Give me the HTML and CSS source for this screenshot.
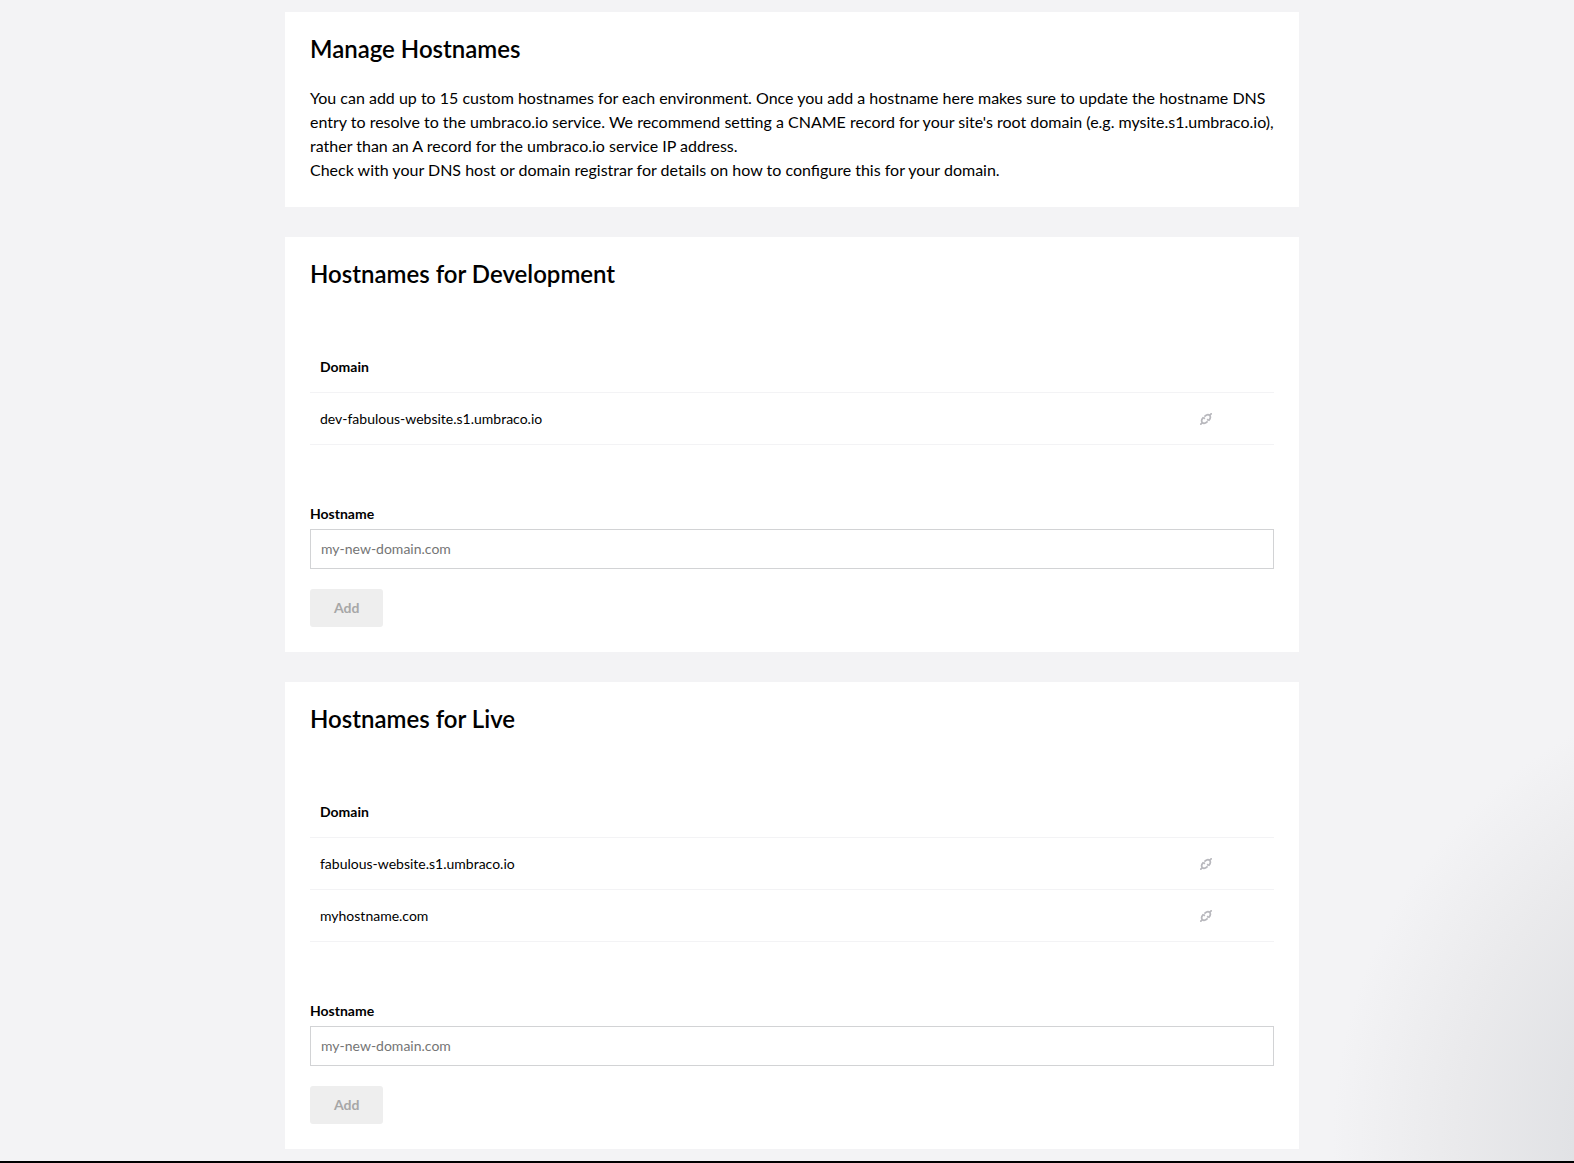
FILE: index.html
```html
<!DOCTYPE html>
<html lang="en">
<head>
  <meta charset="utf-8">
  <meta name="viewport" content="width=device-width, initial-scale=1">
  <title>Manage Hostnames</title>
  <link rel="stylesheet" href="styles.css">
</head>
<body>
  <svg class="sprite" aria-hidden="true">
    <symbol id="icon-link" viewBox="0 0 12 12">
      <path d="M0.2 11.8 2.4 9.6M9.6 2.4 11.8 0.2" />
      <path d="M7.600 8.400C5.900 10.200 3.700 10.900 2.400 9.600 1.100 8.300 1.800 6.100 3.400 4.400" />
      <path d="M4.400 3.600C6.100 1.800 8.300 1.100 9.600 2.400 10.900 3.700 10.200 5.900 8.600 7.600" />
      <path d="M3.400 4.400 4.800 5.800M8.600 7.600 7.200 6.200" />
    </symbol>
  </svg>

  <main class="page">
    <div class="cards">
      <section class="card">
        <h1 class="card-title">Manage Hostnames</h1>
        <p class="intro">You can add up to 15 custom hostnames for each environment. Once you add a hostname here makes sure to update the hostname DNS entry to resolve to the umbraco.io service. We recommend setting a CNAME record for your site's root domain (e.g. mysite.s1.umbraco.io), rather than an A record for the umbraco.io service IP address.<br>Check with your DNS host or domain registrar for details on how to configure this for your domain.</p>
      </section>

      <section class="card">
        <h2 class="card-title">Hostnames for Development</h2>
        <table class="domains">
          <thead>
            <tr><th scope="col">Domain</th><td class="action"></td></tr>
          </thead>
          <tbody>
            <tr>
              <td>dev-fabulous-website.s1.umbraco.io</td>
              <td class="action"><svg class="icon" aria-hidden="true"><use href="#icon-link"/></svg></td>
            </tr>
          </tbody>
        </table>
        <form class="add-form">
          <label class="label" for="dev-hostname">Hostname</label>
          <input class="input" id="dev-hostname" type="text" placeholder="my-new-domain.com">
          <button class="button" type="submit" disabled>Add</button>
        </form>
      </section>

      <section class="card">
        <h2 class="card-title">Hostnames for Live</h2>
        <table class="domains">
          <thead>
            <tr><th scope="col">Domain</th><td class="action"></td></tr>
          </thead>
          <tbody>
            <tr>
              <td>fabulous-website.s1.umbraco.io</td>
              <td class="action"><svg class="icon" aria-hidden="true"><use href="#icon-link"/></svg></td>
            </tr>
            <tr>
              <td>myhostname.com</td>
              <td class="action"><svg class="icon" aria-hidden="true"><use href="#icon-link"/></svg></td>
            </tr>
          </tbody>
        </table>
        <form class="add-form">
          <label class="label" for="live-hostname">Hostname</label>
          <input class="input" id="live-hostname" type="text" placeholder="my-new-domain.com">
          <button class="button" type="submit" disabled>Add</button>
        </form>
      </section>
    </div>
  </main>
</body>
</html>
```
FILE: styles.css
```css
*,
*::before,
*::after {
  box-sizing: border-box;
}

body {
  margin: 0;
  background: #f3f3f5;
  color: #000;
  font-family: Lato, "Liberation Sans", sans-serif;
  font-size: 14px;
  line-height: 20px;
}

.sprite {
  display: none;
}

.page {
  min-height: 100vh;
  padding: 12px 0 12px 10px;
  border-bottom: 2px solid #000;
  background: radial-gradient(circle 461px at calc(100% + 220px) calc(100% - 23px), #d2d3d9 0, #e1e2e5 220px, #eaeaec 340px, #f3f3f5 461px);
}

.cards {
  display: flex;
  flex-direction: column;
  gap: 30px;
  max-width: 1014px;
  margin: 0 auto;
}

.card {
  padding: 25px;
  background: #fff;
}

.card-title {
  margin: 0 0 25px;
  font-size: 24px;
  font-weight: 600;
  line-height: 24px;
}

.intro {
  margin: 0;
  font-size: 16px;
  line-height: 24px;
}

.domains {
  width: 100%;
  margin-top: 55px;
  border-collapse: separate;
  border-spacing: 0;
}

.domains th,
.domains td {
  height: 52px;
  padding: 0 10px;
  border-bottom: 1px solid #f3f3f5;
  text-align: left;
  vertical-align: middle;
}

.domains th {
  font-weight: 700;
}

.domains .action {
  width: 84px;
}

.icon {
  display: block;
  width: 12px;
  height: 12px;
  fill: none;
  stroke: #b8b8bd;
  stroke-width: 1.7;
}

.add-form {
  display: flex;
  flex-direction: column;
  align-items: flex-start;
  margin-top: 59px;
}

.label {
  margin-bottom: 5px;
  font-weight: 700;
}

.input {
  width: 100%;
  height: 40px;
  margin: 0 0 20px;
  padding: 0 10px 2px;
  border: 1px solid #d2d3d5;
  border-radius: 0;
  background: #fff;
  color: #000;
  font: inherit;
}

.input::placeholder {
  color: #757575;
}

.button {
  height: 38px;
  padding: 0 24px;
  border: 0;
  border-radius: 3px;
  background: #eee;
  color: #a7a7a7;
  font: inherit;
  font-weight: 700;
}
```
